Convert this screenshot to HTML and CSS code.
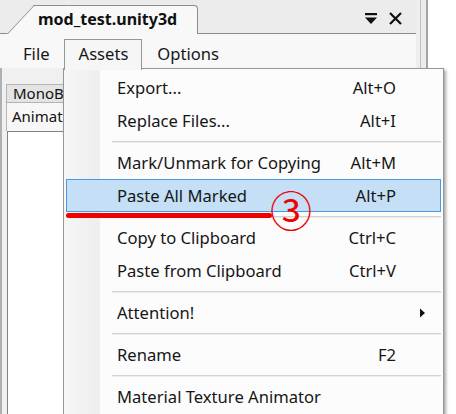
FILE: index.html
```html
<!DOCTYPE html>
<html>
<head>
<meta charset="utf-8">
<link rel="stylesheet" href="styles.css">
</head>
<body>
<div class="app">
  <div class="panel">
    <div class="tabstrip">
      <div class="doc-tab">mod_test.unity3d</div>
      <div class="tab-tools">
        <svg class="tool" width="14" height="14" viewBox="0 0 14 14"><rect x="1" y="1" width="12" height="2.2" fill="#111"/><path d="M1 5.5 H13 L7 12 Z" fill="#111"/></svg>
        <svg class="tool" width="15" height="15" viewBox="0 0 15 15"><path d="M2 2 L13 13 M13 2 L2 13" stroke="#111" stroke-width="2.2" fill="none"/></svg>
      </div>
    </div>
    <div class="menubar">
      <span class="mb-item">File</span>
      <span class="mb-item open">Assets</span>
      <span class="mb-item">Options</span>
    </div>
    <div class="body">
      <div class="side">
        <div class="side-tab">MonoB</div>
        <div class="side-tab sel">Animat</div>
        <div class="listbox"></div>
      </div>
    </div>
  </div>
  <div class="frame"></div>
  <div class="outside"></div>

  <div class="dropdown">
    <div class="row"><span class="label">Export...</span><span class="key">Alt+O</span><span class="sub"></span></div>
    <div class="row"><span class="label">Replace Files...</span><span class="key">Alt+I</span><span class="sub"></span></div>
    <div class="sep"></div>
    <div class="row"><span class="label">Mark/Unmark for Copying</span><span class="key">Alt+M</span><span class="sub"></span></div>
    <div class="row hot"><span class="label">Paste All Marked</span><span class="key">Alt+P</span><span class="sub"></span></div>
    <div class="sep"></div>
    <div class="row"><span class="label">Copy to Clipboard</span><span class="key">Ctrl+C</span><span class="sub"></span></div>
    <div class="row"><span class="label">Paste from Clipboard</span><span class="key">Ctrl+V</span><span class="sub"></span></div>
    <div class="sep"></div>
    <div class="row"><span class="label">Attention!</span><span class="key"></span><span class="sub"><svg width="7" height="10" viewBox="0 0 7 10"><path d="M1 0.5 L6 5 L1 9.5 Z" fill="#111"/></svg></span></div>
    <div class="sep"></div>
    <div class="row"><span class="label">Rename</span><span class="key">F2</span><span class="sub"></span></div>
    <div class="sep"></div>
    <div class="row"><span class="label">Material Texture Animator</span><span class="key"></span><span class="sub"></span></div>
  </div>

  <div class="mark-line"></div>
  <div class="mark-num">③</div>
</div>
</body>
</html>
```

FILE: styles.css
```css
html, body {
  margin: 0;
  padding: 0;
}
body {
  width: 456px;
  height: 414px;
  overflow: hidden;
  background: #ffffff;
  font-family: "Noto Sans", "Open Sans", sans-serif;
  color: #161616;
}
.app {
  position: relative;
  width: 456px;
  height: 414px;
  display: flex;
  overflow: hidden;
}
.panel {
  width: 416px;
  flex: none;
  display: flex;
  flex-direction: column;
  background: #efefef;
}
.tabstrip {
  height: 33px;
  border-bottom: 1px solid #8c8c8c;
  display: flex;
  align-items: flex-start;
  background: #ececec;
}
.doc-tab {
  position: relative;
  z-index: 0;
  margin-top: 5px;
  margin-left: 33px;
  height: 28px;
  width: 159px;
  padding-left: 5px;
  border-top: 1px solid #8c8c8c;
  border-right: 1px solid #8c8c8c;
  border-top-right-radius: 4px;
  background: #f8f8f8;
  font-weight: bold;
  font-size: 16px;
  line-height: 26px;
  color: #111;
  white-space: nowrap;
}
.doc-tab::before {
  content: "";
  position: absolute;
  z-index: -1;
  left: -26px;
  top: -1px;
  bottom: 0;
  width: 34px;
  background: #f8f8f8;
  border-left: 1px solid #8c8c8c;
  border-top: 1px solid #8c8c8c;
  transform: skewX(-43deg);
  transform-origin: bottom left;
}
.tab-tools {
  margin-left: auto;
  margin-right: 13px;
  margin-top: 11px;
  display: flex;
  gap: 10px;
  align-items: center;
}
.menubar {
  height: 34px;
  padding-top: 5px;
  padding-left: 8px;
  box-sizing: border-box;
  display: flex;
  align-items: flex-start;
  background: #f8f8f8;
  font-size: 16.6px;
}
.mb-item {
  height: 30px;
  line-height: 28px;
  padding: 0 13px 0 14px;
  border: 1px solid transparent;
  border-bottom: 0;
}
.mb-item.open {
  position: relative;
  z-index: 3;
  border-color: #979797;
  background: #f6f6f6;
}
.body {
  flex: 1;
  padding: 16px 0 0 4px;
  font-size: 15px;
  background: #f0f0f0;
  border-left: 2px solid #b0b0b0;
}
.side {
  width: 62px;
}
.side-tab {
  height: 17px;
  line-height: 17px;
  padding-left: 6px;
  border: 1px solid #b4b4b4;
  border-bottom: 0;
  border-right: 0;
  background: #e4e4e4;
  white-space: nowrap;
  color: #111;
}
.side-tab.sel {
  height: 28px;
  line-height: 26px;
  background: #f7f7f7;
  padding-left: 5px;
}
.listbox {
  margin-top: 0;
  margin-left: 1px;
  height: 300px;
  background: #ffffff;
  border: 1px solid #828282;
  border-right: 0;
}
.frame {
  width: 12px;
  flex: none;
  box-sizing: border-box;
  background: #ececec;
  border-left: 4px solid #efefef;
  border-right: 2px solid #a4a4a4;
  box-shadow: inset 1px 0 0 #c2c2c2;
}
.outside {
  flex: 1;
  background: #ffffff;
}
.dropdown {
  position: absolute;
  z-index: 2;
  left: 63px;
  top: 68px;
  width: 379px;
  height: 360px;
  padding-top: 2px;
  border: 1px solid #979797;
  background: linear-gradient(to right, #f6f6f6 0, #eeeeee 36px, #fcfcfc 36px);
  box-shadow: 2px 2px 3px rgba(0, 0, 0, 0.35);
  font-size: 16.6px;
}
.row {
  height: 33px;
  margin: 0 2px;
  box-sizing: border-box;
  border: 1px solid transparent;
  display: flex;
  align-items: center;
  padding-left: 50px;
  white-space: nowrap;
}
.row.hot {
  background: #c4dff6;
  border-color: #4a98e0;
}
.label {
  flex: 1;
}
.key {
  text-align: right;
}
.sub {
  width: 44px;
  padding-left: 23px;
  box-sizing: border-box;
  display: flex;
  align-items: center;
}
.sep {
  height: 9px;
  margin: 0 2px 0 48px;
  background: linear-gradient(to bottom, transparent 4px, #d2d2d2 4px, #d2d2d2 5px, #ececec 5px, #ececec 6px, transparent 6px);
}
.mark-line {
  position: absolute;
  z-index: 4;
  left: 66px;
  top: 213px;
  width: 206px;
  height: 5px;
  border-radius: 3px;
  background: #f00000;
}
.mark-num {
  position: absolute;
  z-index: 4;
  left: 270px;
  top: 188px;
  font-family: "Noto Sans CJK JP", sans-serif;
  font-size: 42px;
  line-height: 42px;
  color: #f00000;
}
```
